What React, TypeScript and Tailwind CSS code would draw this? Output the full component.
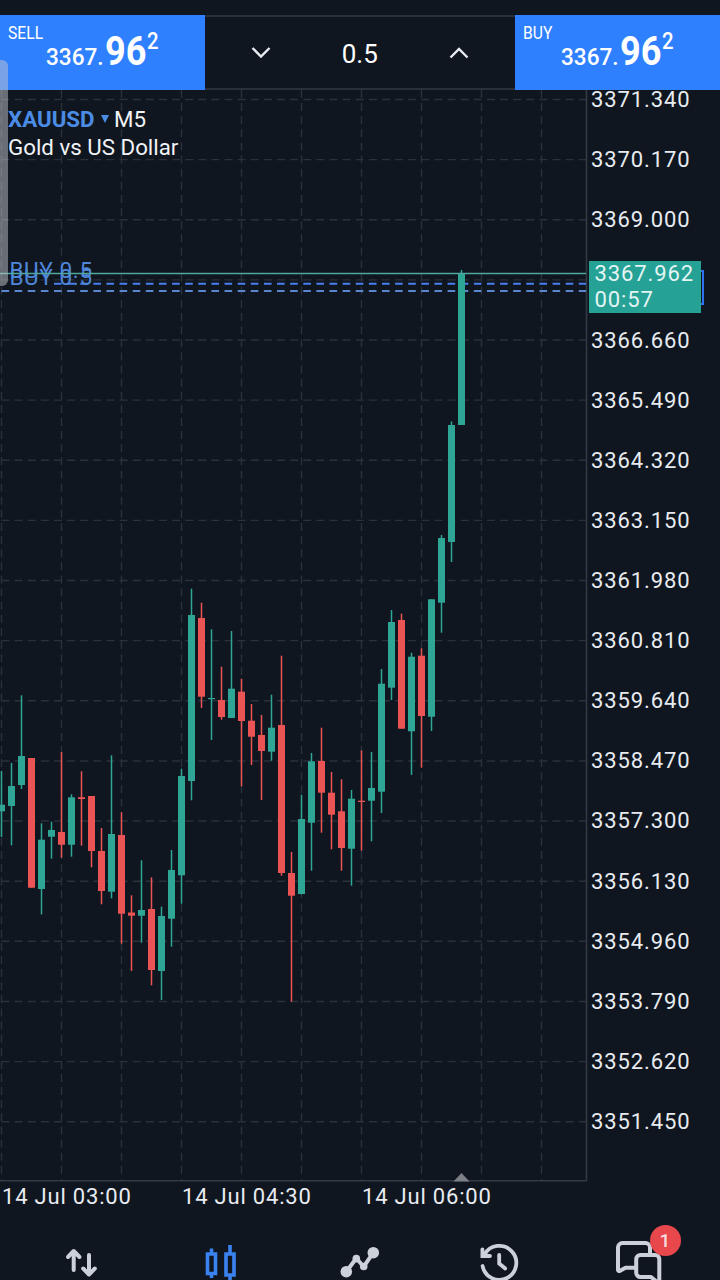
import React from 'react';

type Candle = [high: number, low: number, top: number, bottom: number, up: 0 | 1];

// One candle every 10px, starting from the left edge of the plot
const candles: Candle[] = [
  [771, 837, 804.7, 811.3, 1],
  [763, 845.3, 786, 806, 1],
  [695.3, 789, 756, 785, 1],
  [758, 887.7, 758, 887.7, 0],
  [823.3, 914.5, 839.7, 889, 1],
  [821.7, 858.7, 830, 836.7, 1],
  [752, 857.7, 832, 844.7, 0],
  [794.3, 856.7, 797.3, 844.7, 1],
  [771.3, 845.7, 797.2, 799, 0],
  [796, 867.3, 796, 851, 0],
  [828, 904.3, 851, 891, 0],
  [755.3, 898.3, 834, 891.7, 1],
  [812.3, 943.7, 835, 913.7, 0],
  [895.3, 971, 912.5, 915.7, 0],
  [860.3, 942.7, 910, 915.7, 1],
  [877.3, 985.3, 909, 970, 0],
  [906.7, 1000, 916, 971, 1],
  [850, 946.7, 870, 918.7, 1],
  [768.7, 903.7, 776, 875.3, 1],
  [588.7, 800.3, 615, 781, 1],
  [602.7, 708, 618, 696.7, 0],
  [629.3, 740, 698, 699.2, 1],
  [666.7, 719.7, 700, 717, 0],
  [631, 718, 688.7, 718, 1],
  [678.7, 786.3, 691.7, 721, 0],
  [704, 765, 720.7, 736.7, 0],
  [715, 800, 735, 751, 0],
  [694.7, 760.7, 727.7, 751.7, 1],
  [655.7, 875.7, 725, 873, 0],
  [852, 1001.7, 873, 895.7, 0],
  [794.7, 894.3, 819, 894, 1],
  [753, 870.7, 761.3, 822.7, 1],
  [727.7, 832.7, 761, 792.7, 0],
  [772, 849.3, 792.7, 814.7, 0],
  [779.3, 870.7, 811.3, 848, 0],
  [790, 885.7, 798.7, 848.7, 1],
  [750.3, 850.7, 800.7, 802, 0],
  [752, 841.3, 788, 800.7, 1],
  [669, 813, 683.7, 791.7, 1],
  [610, 700, 622, 687.7, 1],
  [613.7, 728.7, 620, 728.7, 0],
  [652.7, 775, 656.7, 731.3, 1],
  [648.3, 767.7, 655.7, 716, 0],
  [599.3, 731, 599.3, 716.7, 1],
  [535, 632.7, 538, 602.7, 1],
  [421.5, 562, 425, 542, 1],
  [270, 425, 273, 425, 1],
];

// The empty slot sits under the current price tag
const prices = [
  '3371.340', '3370.170', '3369.000', '', '3366.660', '3365.490',
  '3364.320', '3363.150', '3361.980', '3360.810', '3359.640', '3358.470',
  '3357.300', '3356.130', '3354.960', '3353.790', '3352.620', '3351.450',
];

const times = ['14 Jul 03:00', '14 Jul 04:30', '14 Jul 06:00'];

const PriceButton: React.FC<{ side: string; className: string }> = ({ side, className }) => (
  <button className={`relative h-[75px] bg-[#2f80ff] text-left text-white ${className}`}>
    <span className="absolute left-[7.5px] top-[5.5px] origin-left scale-x-[0.87] text-[18px] leading-6">{side}</span>
    <span className="flex h-full items-start pl-[45.5px] font-medium leading-none">
      <span className="mt-[29.5px] w-[59px] origin-left scale-x-[0.94] text-[24px]">3367.</span>
      <span className="mt-[15px] w-[42px] origin-left scale-x-[0.87] text-[41.5px] font-bold">96</span>
      <span className="mt-[14.4px] origin-left scale-x-[0.85] text-[24px]">2</span>
    </span>
  </button>
);

const Chart: React.FC = () => (
  <svg className="block h-[1092px] w-[588px] shrink-0" viewBox="0 90 588 1092">
    {/* Grid */}
    <g stroke="#2b313a" strokeWidth="1.4" strokeDasharray="8 5.12">
      {prices.map((_, i) => (
        <line key={i} x1="1.5" x2="586" y1={99.5 + i * 60.13} y2={99.5 + i * 60.13} />
      ))}
      {Array.from({ length: 10 }, (_, i) => (
        <line key={i} x1={1.5 + i * 60} x2={1.5 + i * 60} y1="90" y2="1180" />
      ))}
    </g>
    <path d="M0 1180.8H586.5V90" fill="none" stroke="#343a43" strokeWidth="1.6" />

    {/* Open positions */}
    <g strokeWidth="2" strokeDasharray="7.6 5.52">
      <line x1="54" x2="586" y1="283.8" y2="283.8" stroke="#4a7ff0" />
      <line x1="1.5" x2="586" y1="291" y2="291" stroke="#5a86cf" />
    </g>
    <g fill="#4f86da" fontSize="22.5" letterSpacing="0.6">
      <text x="9.5" y="277.5">BUY 0.5</text>
      <text x="9.5" y="284.5">BUY 0.5</text>
    </g>

    {candles.map(([high, low, top, bottom, up], i) => {
      const x = 1.5 + i * 10;
      return (
        <g key={i} fill={up ? '#2fa596' : '#eb5454'}>
          <rect x={x - 0.75} y={high} width="1.5" height={low - high} />
          <rect x={x - 3.5} y={top} width="7" height={bottom - top} />
        </g>
      );
    })}

    <line x1="0" x2="586" y1="273.4" y2="273.4" stroke="#4fa79d" strokeWidth="1.5" />
    <path d="M453.5 1181.5L461.5 1173L469.5 1181.5Z" fill="#7d8087" />
  </svg>
);

const NavBar: React.FC = () => (
  <nav className="flex h-[60px] shrink-0 overflow-hidden pl-[11px] text-[#ccd0d9]">
    <div className="w-[140px]">
      <svg className="mx-auto mt-5 h-12 w-12" viewBox="57 1240 48 48" fill="none" stroke="currentColor" strokeWidth="4" strokeLinecap="round" strokeLinejoin="round">
        <path d="M73.7 1270V1251.5M68 1257L73.7 1251L79.5 1257" />
        <path d="M89 1255V1273.5M83.2 1268.5L89 1274.5L94.8 1268.5" />
      </svg>
    </div>
    <div className="w-[139px] text-[#3a82f0]">
      <svg className="mx-auto mt-5 h-12 w-12" viewBox="197 1240 48 48" fill="none" stroke="currentColor" strokeWidth="3.6">
        <path d="M207.5 1254H215.5V1273.5H207.5ZM211.5 1248.5V1254M211.5 1273.5V1278" />
        <path d="M226 1254H234V1275H226ZM230 1245V1254M230 1275V1282" />
      </svg>
    </div>
    <div className="w-[139px]">
      <svg className="mx-auto mt-5 h-12 w-12" viewBox="336 1240 48 48" fill="currentColor" stroke="currentColor" strokeLinejoin="round">
        <path d="M346.3 1271.7L356.3 1258.3L363.7 1266.7L373.3 1252.7" fill="none" strokeWidth="4" />
        <g stroke="none">
          <circle cx="346.3" cy="1271.7" r="5.8" />
          <circle cx="356.3" cy="1258.6" r="3.8" />
          <circle cx="363.7" cy="1266.5" r="3.8" />
          <circle cx="373.3" cy="1252.7" r="5.8" />
        </g>
      </svg>
    </div>
    <div className="w-[139px]">
      <svg className="mx-auto mt-5 h-12 w-12" viewBox="475 1240 48 48" fill="none" stroke="currentColor" strokeWidth="3.8" strokeLinecap="round">
        <path d="M484.5 1254.5A17 17 0 1 1 482.6 1266" />
        <path d="M482.4 1249.3V1256H490" />
        <path d="M499.2 1255V1263.5L505.2 1268.5" />
      </svg>
    </div>
    <div className="relative w-[139px]">
      <svg className="mx-auto mt-5 h-12 w-12" viewBox="614 1240 48 48" fill="none" stroke="currentColor" strokeWidth="4" strokeLinejoin="round">
        <path d="M650 1254V1247.5A4.5 4.5 0 0 0 645.5 1243H622.5A4.5 4.5 0 0 0 618 1247.5V1269.5Q618 1272 620.5 1270.5L625.5 1267.8H635" />
        <path d="M640.5 1255H655A4.3 4.3 0 0 1 659.3 1259.3V1284L651 1277H640.5A4.3 4.3 0 0 1 636.2 1272.7V1259.3A4.3 4.3 0 0 1 640.5 1255Z" />
      </svg>
      <span className="absolute left-[81.5px] top-[5px] flex h-[31px] w-[31px] items-center justify-center rounded-full bg-[#e8474c] text-[19px] font-medium leading-none text-[#f6dcde]">
        1
      </span>
    </div>
  </nav>
);

export default function App() {
  return (
    <div className="relative flex h-[1280px] w-[720px] flex-col overflow-hidden bg-[#0f161f] pt-[15px] font-['Roboto',sans-serif] text-[#e8ebf0]">
      {/* Trade panel */}
      <header className="relative z-10 flex h-[75px] shrink-0">
        <PriceButton side="SELL" className="w-[205px]" />
        <div className="flex flex-1 items-center justify-between border-y-2 border-[#2a3038] pl-[46px] pr-[46.5px] text-[26px]">
          <svg className="h-5 w-5" viewBox="0 0 20 20" fill="none" stroke="currentColor" strokeWidth="2.4">
            <path d="M1.5 5L10 13.5L18.5 5" />
          </svg>
          <span className="pt-[3px] text-white">0.5</span>
          <svg className="h-5 w-5" viewBox="0 0 20 20" fill="none" stroke="currentColor" strokeWidth="2.4">
            <path d="M1.5 14.5L10 6L18.5 14.5" />
          </svg>
        </div>
        <PriceButton side="BUY" className="w-[205px]" />
      </header>

      <main className="relative flex h-[1092px] shrink-0">
        <Chart />
        <div className="-mt-[20.4px] flex w-[132px] flex-col pl-[3px] text-[22px] tracking-[0.9px]">
          {prices.map((p, i) => (
            <span key={i} className="flex h-[60.12px] shrink-0 items-center">{p}</span>
          ))}
        </div>

        <div className="absolute left-[8px] top-[15px] text-[22.3px] leading-7 text-[#f1f3f6]">
          <div className="flex items-center">
            <span className="w-[92px] font-bold text-[#4a8ce6]">XAUUSD</span>
            <svg className="h-2 w-2.5" viewBox="0 0 10 8" fill="#4a8ce6">
              <path d="M1 0H9L5 8Z" />
            </svg>
            <span className="ml-[4px]">M5</span>
          </div>
          <div>Gold vs US Dollar</div>
        </div>

        <div className="absolute left-[600px] top-[180px] h-[35px] w-[103.5px] border-2 border-[#2f72f0]" />
        <div className="absolute left-[589px] top-[171px] h-[52px] w-[112px] bg-[#26a196] pl-[5.5px] text-[22px] leading-[26px] tracking-[0.9px] text-[#e3f5f3]">
          <div>3367.962</div>
          <div>00:57</div>
        </div>
      </main>

      <div className="flex h-[38px] shrink-0 text-[22px] tracking-[0.8px]">
        {times.map((t) => (
          <span key={t} className="w-[180px] pl-[2px] leading-[30px]">{t}</span>
        ))}
      </div>

      <NavBar />

      {/* Edge panel handle */}
      <div className="absolute left-0 top-[60px] z-20 h-[226px] w-[8px] rounded-r-[6px] bg-[#c4c6ca]/50" />
    </div>
  );
}
